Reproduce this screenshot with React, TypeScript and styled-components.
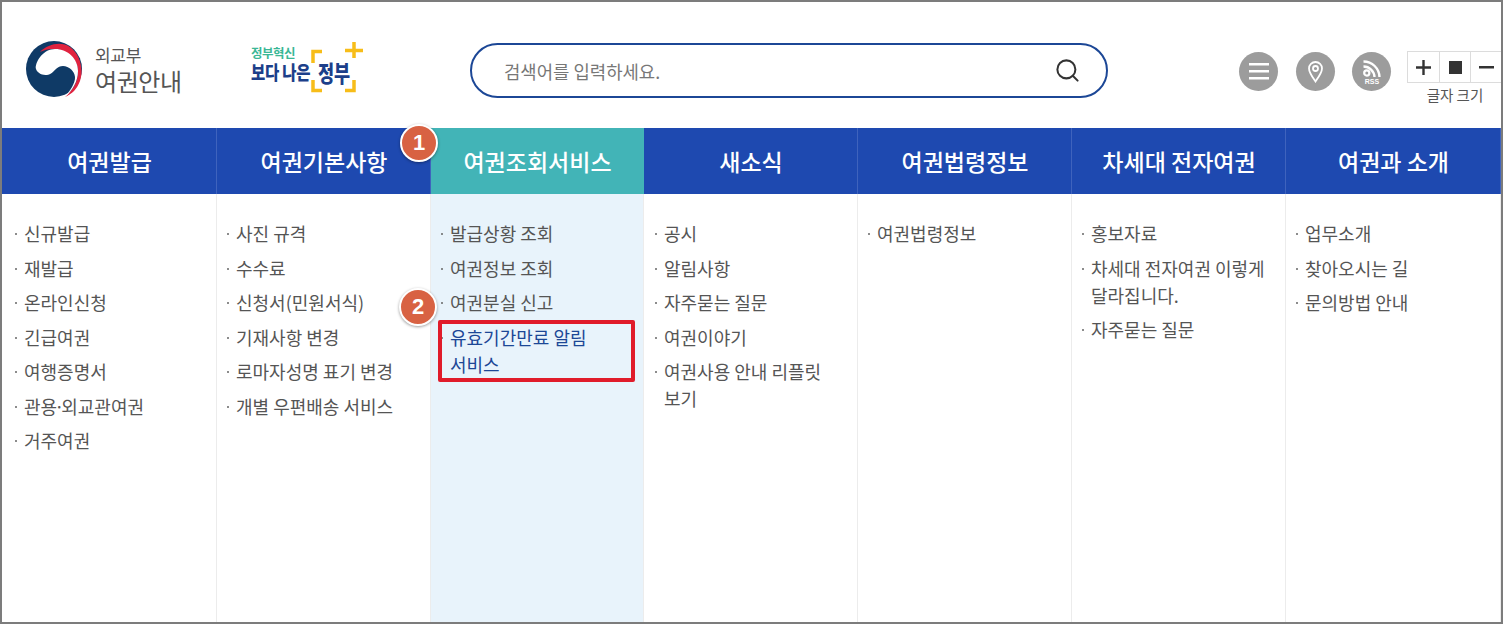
import styled, { createGlobalStyle } from 'styled-components';
import { Search } from 'lucide-react';

const GlobalStyle = createGlobalStyle`
  html, body { margin: 0; padding: 0; background: #fff; }
  body { font-family: "Noto Sans CJK KR", "Noto Sans", sans-serif; }
  ul { list-style: none; margin: 0; padding: 0; }
`;

const Frame = styled.div`
  width: 1503px;
  height: 624px;
  box-sizing: border-box;
  border: 2px solid #7c7c7c;
  overflow: hidden;
  display: flex;
  flex-direction: column;
  background: #fff;
`;

const Header = styled.header`
  height: 126px;
  flex: none;
  display: flex;
  align-items: flex-start;
  padding-left: 24px;
`;

const SiteLogo = styled.div`
  display: flex;
  align-items: center;
  gap: 13px;
  flex: none;
  width: 225px;
  margin-top: 39px;
`;

const LogoText = styled.div`
  display: flex;
  flex-direction: column;
  margin-top: 2px;
  color: #555;
`;

const LogoSmall = styled.span`
  font-size: 17px;
  line-height: 22px;
  font-weight: 400;
  letter-spacing: -0.3px;
`;

const LogoLarge = styled.span`
  font-size: 24px;
  line-height: 30px;
  font-weight: 400;
  letter-spacing: -0.4px;
`;

const GovLogo = styled.div`
  position: relative;
  flex: none;
  width: 112px;
  height: 52px;
  margin-top: 40px;
`;

const GovTop = styled.span`
  position: absolute;
  left: 0;
  top: 3px;
  font-size: 12.5px;
  line-height: 15px;
  font-weight: 700;
  letter-spacing: -0.5px;
  color: #3ab795;
`;

const GovMid = styled.span`
  position: absolute;
  left: 0;
  top: 18px;
  font-size: 15.5px;
  line-height: 22px;
  font-weight: 900;
  letter-spacing: -0.3px;
  color: #1c3f8a;
  white-space: nowrap;
  transform: scaleY(1.25);
`;

const GovWord = styled.span`
  position: absolute;
  left: 67px;
  top: 19px;
  font-size: 17.5px;
  line-height: 24px;
  font-weight: 900;
  color: #1c3f8a;
  white-space: nowrap;
  transform: scaleY(1.3);
`;

const GovMark = styled.svg`
  position: absolute;
  left: 0;
  top: 0;
`;

const SearchBox = styled.form`
  box-sizing: border-box;
  width: 638px;
  height: 55px;
  margin: 41px 0 0 107px;
  border: 2px solid #1c4796;
  border-radius: 28px;
  display: flex;
  align-items: center;
  justify-content: space-between;
  padding: 0 25px 0 32px;
  flex: none;
`;

const SearchHint = styled.span`
  font-size: 17.8px;
  color: #777;
`;

const IconRow = styled.div`
  display: flex;
  flex: none;
  gap: 17.5px;
  margin: 50px 0 0 131px;
`;

const RoundIcon = styled.button`
  width: 39px;
  height: 39px;
  padding: 0;
  border: 0;
  border-radius: 50%;
  background: #9c9c9c;
  display: flex;
  align-items: center;
  justify-content: center;
`;

const SizeControl = styled.div`
  margin: 49px 0 0 16px;
  width: 96px;
  flex: none;
`;

const SizeButtons = styled.div`
  display: grid;
  grid-template-columns: 31px 31px 32px;
  height: 32px;
  box-sizing: border-box;
  border: 1px solid #dcdcdc;
  border-right: 0;
`;

const SizeButton = styled.span`
  display: flex;
  align-items: center;
  justify-content: center;
  & + & { border-left: 1px solid #dcdcdc; }
`;

const SizeLabel = styled.div`
  margin-top: 2px;
  text-align: center;
  font-size: 14.5px;
  line-height: 20px;
  color: #555;
`;

const MainNav = styled.div`
  flex: 1;
  display: grid;
  grid-template-columns: 215px 214px 213px 214px 214px 214px 215px;
  grid-template-rows: 66px 1fr;
  position: relative;
`;

const NavTitle = styled.div<{ $active?: boolean }>`
  display: flex;
  align-items: center;
  justify-content: center;
  padding-bottom: 1px;
  font-size: 23px;
  font-weight: 500;
  color: #fff;
  background: ${(p) => (p.$active ? '#42b4b7' : '#1e49b0')};
  box-shadow: inset -1px 0 0 ${(p) => (p.$active ? '#42b4b7' : '#3f63bd')};
`;

const SubColumn = styled.ul<{ $active?: boolean }>`
  padding: 26px 0 0 9px;
  background: ${(p) => (p.$active ? '#e8f3fb' : '#fff')};
  border-right: 1px solid #ececec;
  display: flex;
  flex-direction: column;
  gap: 7.5px;

  &:first-of-type { padding-left: 12px; }
  &:nth-of-type(4) { padding-left: 10px; }
`;

const SubItem = styled.li<{ $highlight?: boolean }>`
  position: relative;
  padding: 0 16px 0 10px;
  font-size: 18px;
  line-height: 27px;
  word-break: keep-all;
  color: ${(p) => (p.$highlight ? '#1c4796' : '#555')};

  &::before {
    content: '';
    position: absolute;
    left: 1px;
    top: 13px;
    width: 2px;
    height: 2px;
    border-radius: 50%;
    background: #666;
  }

  ${(p) =>
    p.$highlight &&
    `&::after {
      content: '';
      position: absolute;
      inset: -4px 8px -4px -2px;
      border: 4px solid #e01b2a;
      border-radius: 2px;
    }`}
`;

const MidDot = styled.span`
  margin: 0 -3px;
`;

const Badge = styled.span<{ $x: number; $y: number }>`
  position: absolute;
  left: ${(p) => p.$x}px;
  top: ${(p) => p.$y}px;
  box-sizing: border-box;
  width: 38px;
  height: 38px;
  border: 2.5px solid #fff;
  border-radius: 50%;
  background: #d86243;
  box-shadow: 0 1px 3px rgba(0, 0, 0, 0.4);
  color: #fff;
  font-family: "Liberation Sans", sans-serif;
  font-size: 22px;
  font-weight: 700;
  display: flex;
  align-items: center;
  justify-content: center;
`;

const menus = [
  { title: '여권발급', items: ['신규발급', '재발급', '온라인신청', '긴급여권', '여행증명서', '관용·외교관여권', '거주여권'] },
  { title: '여권기본사항', items: ['사진 규격', '수수료', '신청서(민원서식)', '기재사항 변경', '로마자성명 표기 변경', '개별 우편배송 서비스'] },
  { title: '여권조회서비스', active: true, items: ['발급상황 조회', '여권정보 조회', '여권분실 신고', '유효기간만료 알림 서비스'] },
  { title: '새소식', items: ['공시', '알림사항', '자주묻는 질문', '여권이야기', '여권사용 안내 리플릿 보기'] },
  { title: '여권법령정보', items: ['여권법령정보'] },
  { title: '차세대 전자여권', items: ['홍보자료', '차세대 전자여권 이렇게 달라집니다.', '자주묻는 질문'] },
  { title: '여권과 소개', items: ['업무소개', '찾아오시는 길', '문의방법 안내'] },
];

function TaegeukLogo() {
  return (
    <svg width="56" height="56" viewBox="0 0 56 56">
      <circle cx="28" cy="28" r="28" fill="#0f3a66" />
      <path d="M14 11C22 3 35 0 44 6C54 13 58 28 54 40C51 48 46 53 39 56C46 50 52 42 52 30C52 18 40 8 27 8C22 8 18 9 14 11Z" fill="#e0233f" />
      <path d="M9.700 27C10 19 18 8 29 8C42 8 52 18 52 30C52 41 46 50 39 55.700C44 50 49.500 42 49 36C48.500 30 43 25 37 25C31 25 29 30 25 32.500C19 36 11 33 9.700 27Z" fill="#fff" />
    </svg>
  );
}

function itemText(text: string) {
  const parts = text.split('·');
  if (parts.length < 2) return text;
  return (
    <>
      {parts[0]}
      <MidDot>·</MidDot>
      {parts[1]}
    </>
  );
}

export default function App() {
  return (
    <>
      <GlobalStyle />
      <Frame>
        <Header>
          <SiteLogo>
            <TaegeukLogo />
            <LogoText>
              <LogoSmall>외교부</LogoSmall>
              <LogoLarge>여권안내</LogoLarge>
            </LogoText>
          </SiteLogo>
          <GovLogo>
            <GovMark width="112" height="52" viewBox="0 0 112 52" fill="none" stroke="#f7bd19" strokeWidth="3.500">
              <path d="M62 21V9.500H71" />
              <path d="M62 38V48.500H71" />
              <path d="M103 38V48.500H94" />
              <path d="M103 0V16M94 8.500H112" />
            </GovMark>
            <GovTop>정부혁신</GovTop>
            <GovMid>보다 나은</GovMid>
            <GovWord>정부</GovWord>
          </GovLogo>
          <SearchBox>
            <SearchHint>검색어를 입력하세요.</SearchHint>
            <Search size={27} color="#333" strokeWidth={1.8} />
          </SearchBox>
          <IconRow>
            <RoundIcon>
              <svg width="20" height="17" viewBox="0 0 20 17" fill="#fff">
                <rect y="0" width="20" height="2.500" />
                <rect y="7" width="20" height="2.500" />
                <rect y="14" width="20" height="2.500" />
              </svg>
            </RoundIcon>
            <RoundIcon>
              <svg width="15" height="22" viewBox="0 0 15 22" fill="none" stroke="#fff" strokeWidth="1.800">
                <path d="M7.500 20.500C4 15.500 1 11.500 1 7.500a6.500 6.500 0 0 1 13 0C14 11.500 11 15.500 7.500 20.500Z" />
                <circle cx="7.500" cy="7.500" r="2.500" />
              </svg>
            </RoundIcon>
            <RoundIcon>
              <svg width="18" height="24" viewBox="0 0 18 24" fill="none" stroke="#fff">
                <path d="M0.500 1.500A16 16 0 0 1 16.500 17" strokeWidth="2.400" />
                <path d="M0.500 6.500A11 11 0 0 1 11.500 17" strokeWidth="2.400" />
                <circle cx="3.800" cy="13" r="2.600" strokeWidth="2.200" />
                <text x="9" y="24" textAnchor="middle" fontFamily="Liberation Sans, sans-serif" fontSize="7" fontWeight="700" fill="#fff" stroke="none">RSS</text>
              </svg>
            </RoundIcon>
          </IconRow>
          <SizeControl>
            <SizeButtons>
              <SizeButton>
                <svg width="15" height="15" viewBox="0 0 15 15" fill="#333"><path d="M6.300 0h2.400v6.300H15v2.400H8.700V15H6.300V8.700H0V6.300h6.300z" /></svg>
              </SizeButton>
              <SizeButton>
                <svg width="13" height="13" viewBox="0 0 13 13" fill="#333"><rect width="13" height="13" /></svg>
              </SizeButton>
              <SizeButton>
                <svg width="15" height="3" viewBox="0 0 15 3" fill="#333"><rect width="15" height="2.500" /></svg>
              </SizeButton>
            </SizeButtons>
            <SizeLabel>글자 크기</SizeLabel>
          </SizeControl>
        </Header>
        <MainNav>
          {menus.map((m) => (
            <NavTitle key={m.title} $active={m.active}>{m.title}</NavTitle>
          ))}
          {menus.map((m) => (
            <SubColumn key={m.title} $active={m.active}>
              {m.items.map((item) => (
                <SubItem key={item} $highlight={item.startsWith('유효')}>{itemText(item)}</SubItem>
              ))}
            </SubColumn>
          ))}
          <Badge $x={398} $y={-4}>1</Badge>
          <Badge $x={397} $y={160}>2</Badge>
        </MainNav>
      </Frame>
    </>
  );
}
